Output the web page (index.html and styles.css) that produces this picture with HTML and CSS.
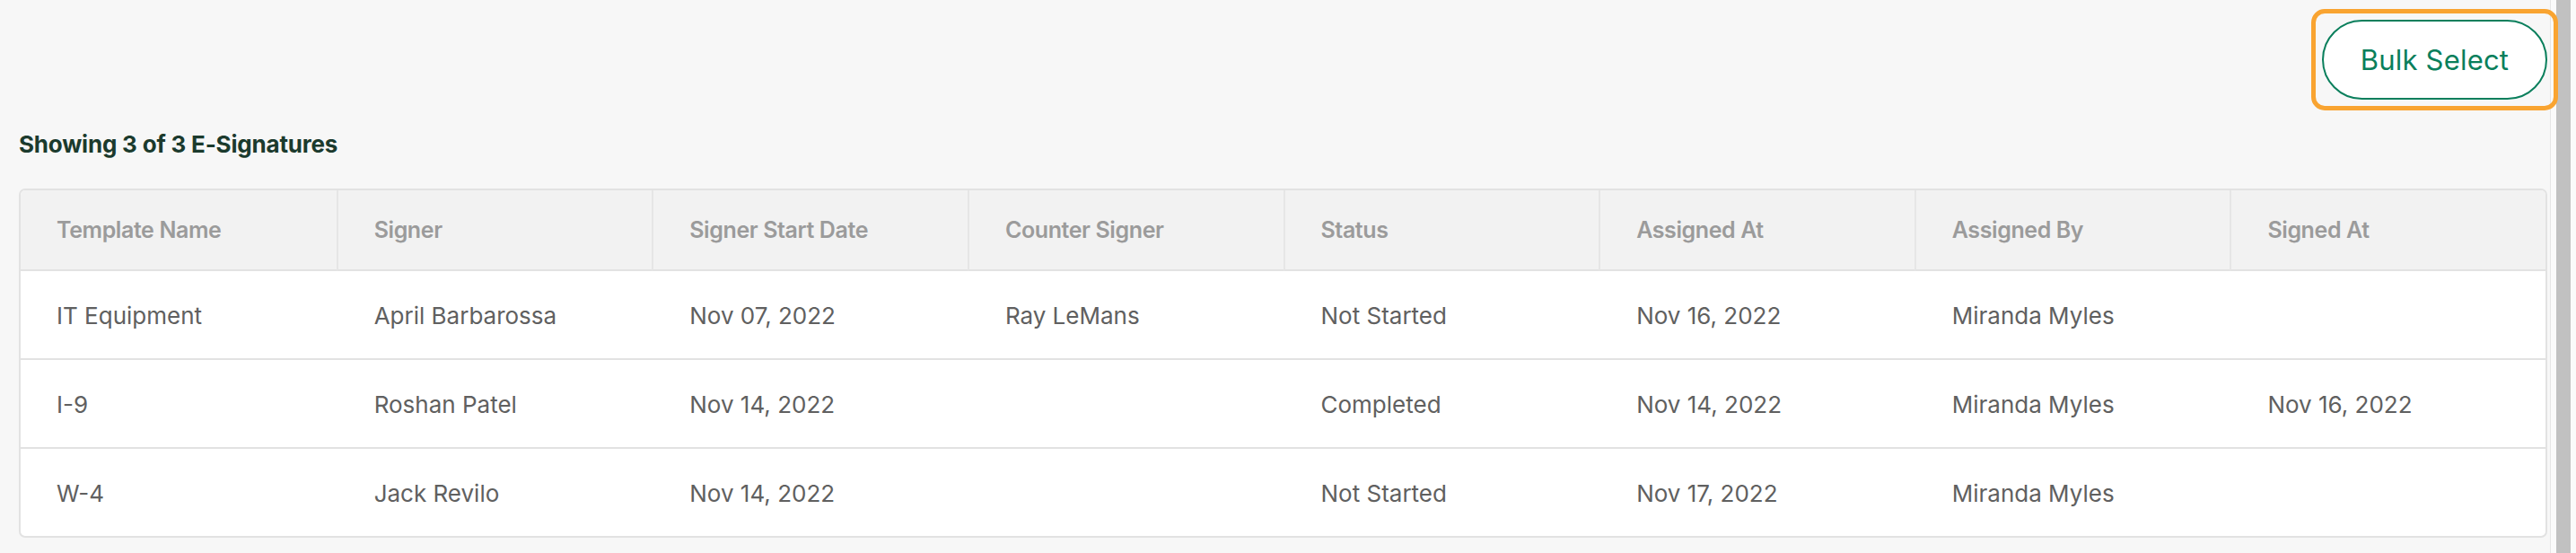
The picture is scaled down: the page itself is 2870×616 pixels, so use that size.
FILE: index.html
```html
<!DOCTYPE html>
<html lang="en">
<head>
<meta charset="utf-8">
<title>E-Signatures</title>
<link rel="stylesheet" href="styles.css">
</head>
<body>
<main class="main">
  <div class="toolbar">
    <div class="highlight">
      <button class="bulk-btn" type="button">Bulk Select</button>
    </div>
  </div>
  <h2 class="count">Showing 3 of 3 E-Signatures</h2>
  <div class="table-wrap">
    <table class="sig-table">
      <thead>
        <tr>
          <th>Template Name</th>
          <th>Signer</th>
          <th>Signer Start Date</th>
          <th>Counter Signer</th>
          <th>Status</th>
          <th>Assigned At</th>
          <th>Assigned By</th>
          <th>Signed At</th>
        </tr>
      </thead>
      <tbody>
        <tr>
          <td>IT Equipment</td>
          <td>April Barbarossa</td>
          <td>Nov 07, 2022</td>
          <td>Ray LeMans</td>
          <td>Not Started</td>
          <td>Nov 16, 2022</td>
          <td>Miranda Myles</td>
          <td></td>
        </tr>
        <tr>
          <td>I-9</td>
          <td>Roshan Patel</td>
          <td>Nov 14, 2022</td>
          <td></td>
          <td>Completed</td>
          <td>Nov 14, 2022</td>
          <td>Miranda Myles</td>
          <td>Nov 16, 2022</td>
        </tr>
        <tr>
          <td>W-4</td>
          <td>Jack Revilo</td>
          <td>Nov 14, 2022</td>
          <td></td>
          <td>Not Started</td>
          <td>Nov 17, 2022</td>
          <td>Miranda Myles</td>
          <td></td>
        </tr>
      </tbody>
    </table>
  </div>
</main>
<div class="scrollbar"><div class="thumb"></div></div>
</body>
</html>
```

FILE: styles.css
```css
* { box-sizing: border-box; }
html, body { margin: 0; padding: 0; overflow: hidden; }
body {
  background: #f7f7f7;
  font-family: Inter, "Noto Sans", sans-serif;
  height: 616px;
}
.main {
  width: 2841px;
  padding: 22px 3px 0 21px;
}
.toolbar {
  display: flex;
  justify-content: flex-end;
}
.highlight {
  outline: 5px solid #f9a431;
  outline-offset: 7px;
  border-radius: 3px;
  position: relative;
  z-index: 2;
}
.bulk-btn {
  display: block;
  width: 251px;
  height: 89px;
  border: 2px solid #0a7f5c;
  border-radius: 45px;
  background: #ffffff;
  color: #0a7f5c;
  font-family: Inter, "Noto Sans", sans-serif;
  font-size: 31px;
  font-weight: 400;
  letter-spacing: 0.2px;
  padding: 0;
  cursor: pointer;
}
.count {
  margin: 34px 0 0 0;
  font-size: 26px;
  line-height: 32px;
  font-weight: 700;
  color: #1b3a2d;
  letter-spacing: -0.2px;
}
.table-wrap {
  margin-top: 33px;
  border: 2px solid #e2e2e2;
  border-radius: 7px;
  overflow: hidden;
  background: #ffffff;
}
.sig-table {
  width: 100%;
  border-collapse: separate;
  border-spacing: 0;
  table-layout: fixed;
}
.sig-table th {
  background: #f2f2f2;
  color: #9b9b9b;
  font-weight: 600;
  font-size: 25px;
  line-height: 30px;
  text-align: left;
  padding: 29px 10px 29px 40px;
  border-bottom: 2px solid #e2e2e2;
  border-left: 2px solid #e6e6e6;
  letter-spacing: -0.4px;
}
.sig-table th:first-child { border-left: none; }
.sig-table td {
  color: #606060;
  font-size: 26px;
  line-height: 30px;
  font-weight: 400;
  padding: 35px 10px 32px 40px;
  border-bottom: 2px solid #e2e2e2;
  letter-spacing: 0;
  white-space: nowrap;
}
.sig-table td + td { padding-left: 42px; }
.sig-table tbody tr:last-child td { border-bottom: none; }
.scrollbar {
  position: fixed;
  top: 0;
  right: 0;
  height: 616px;
  width: 29px;
  border-left: 1px solid #e6e6e6;
  background: #fafafa;
  z-index: 1;
}
.thumb {
  margin-left: 6px;
  width: 16px;
  height: 616px;
  background: #c1c1c1;
}
```
